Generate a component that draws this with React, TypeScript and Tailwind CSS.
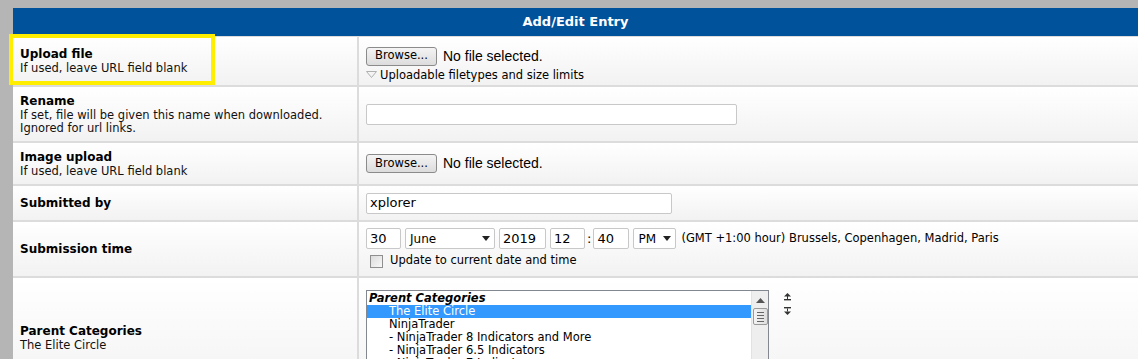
import React from "react";

const FONT = { fontFamily: '"DejaVu Sans", Verdana, sans-serif' };

// Single row of the form table: label cell on the left, control cell on the right
function Row({
  h,
  label,
  desc,
  children,
  last,
}: {
  h: string;
  label: string;
  desc?: React.ReactNode;
  children?: React.ReactNode;
  last?: boolean;
}) {
  return (
    <div className={`flex ${h} ${last ? "" : "border-b-2 border-[#dcdcdc]"}`}>
      <div className="w-[346px] shrink-0 flex flex-col justify-center px-[7px] bg-gradient-to-b from-white to-[#f2f2f2] border-r-2 border-[#dcdcdc]">
        <div className="text-[12px] font-bold text-black leading-[15px]">{label}</div>
        {desc && <div className="text-[11.5px] text-[#111] leading-[13px]">{desc}</div>}
      </div>
      <div className="flex-1 flex flex-col justify-center px-[7px] bg-gradient-to-b from-white to-[#f2f2f2]">
        {children}
      </div>
    </div>
  );
}

function BrowseButton() {
  return (
    <div className="flex items-center">
      <div className="h-[19px] w-[71px] flex items-center justify-center rounded-[3px] border border-[#8b8b8b] bg-gradient-to-b from-[#f4f4f4] to-[#dcdcdc] text-[11.5px] text-black">
        Browse...
      </div>
      <span className="ml-[6px] text-[14px] text-black" style={{ fontFamily: '"Liberation Sans", Arial, sans-serif' }}>
        No file selected.
      </span>
    </div>
  );
}

function TextBox({ w, value }: { w: string; value?: string }) {
  return (
    <div className={`${w} h-[21px] border border-[#c8c8c8] rounded-[2px] bg-white flex items-center px-[3px] text-[13px] text-black`}>
      {value}
    </div>
  );
}

function SelectBox({ w, value }: { w: string; value: string }) {
  return (
    <div className={`${w} h-[21px] border border-[#c8c8c8] rounded-[2px] bg-white flex items-center justify-between px-[4px] text-[12px] text-black`}>
      <span>{value}</span>
      <svg width="8" height="5" viewBox="0 0 8 5">
        <path d="M0 0h8L4 5z" fill="#222" />
      </svg>
    </div>
  );
}

const categories = [
  "NinjaTrader",
  "- NinjaTrader 8 Indicators and More",
  "- NinjaTrader 6.5 Indicators",
  "- NinjaTrader 7 Indicators",
  "- NinjaTrader Strategies",
  "Other Platforms",
];

export default function App() {
  return (
    <div className="w-[1138px] h-[359px] overflow-hidden bg-[#b5b5b5] pt-[8px] pl-[13px] relative" style={FONT}>
      <div className="bg-white">
        <div className="h-[29px] bg-[#00529b] flex items-center justify-center text-white text-[13px] font-bold border-b border-[#dcdcdc]">
          Add/Edit Entry
        </div>

        <Row h="h-[50px]" label="Upload file" desc="If used, leave URL field blank">
          <div className="self-start mt-[5px]">
            <BrowseButton />
            <div className="flex items-center mt-[1px] text-[11.5px] leading-[14px] text-black">
              <svg width="11" height="7" viewBox="0 0 11 7" className="mr-[3px]">
                <path d="M0.5 0.5h10L5.5 6.5z" fill="#f4f4f4" stroke="#b0b0b0" />
              </svg>
              Uploadable filetypes and size limits
            </div>
          </div>
        </Row>

        <Row
          h="h-[56px]"
          label="Rename"
          desc={
            <>
              If set, file will be given this name when downloaded.
              <br />
              Ignored for url links.
            </>
          }
        >
          <TextBox w="w-[371px]" />
        </Row>

        <Row h="h-[43px]" label="Image upload" desc="If used, leave URL field blank">
          <BrowseButton />
        </Row>

        <Row h="h-[36px]" label="Submitted by">
          <TextBox w="w-[306px]" value="xplorer" />
        </Row>

        <Row h="h-[56px]" label="Submission time">
          <div className="flex items-center">
            <TextBox w="w-[35px]" value="30" />
            <div className="ml-[4px]">
              <SelectBox w="w-[90px]" value="June" />
            </div>
            <div className="ml-[4px]">
              <TextBox w="w-[47px]" value="2019" />
            </div>
            <div className="ml-[4px]">
              <TextBox w="w-[35px]" value="12" />
            </div>
            <span className="mx-[2px] text-[13px]">:</span>
            <TextBox w="w-[36px]" value="40" />
            <div className="ml-[4px]">
              <SelectBox w="w-[43px]" value="PM" />
            </div>
            <span className="ml-[5px] text-[11.5px] text-black">
              (GMT +1:00 hour) Brussels, Copenhagen, Madrid, Paris
            </span>
          </div>
          <div className="flex items-center mt-[3px] ml-[4px] text-[11.5px] text-black">
            <div className="w-[13px] h-[13px] border border-[#8f8f8f] bg-gradient-to-br from-[#dcdcdc] to-[#f8f8f8] mr-[7px]" />
            Update to current date and time
          </div>
        </Row>

        <Row h="h-[120px]" label="Parent Categories" desc="The Elite Circle" last>
          <div className="flex items-start self-start mt-[8px]">
            <div className="w-[403px] h-[104px] border border-[#828790] bg-white flex overflow-hidden">
              <div className="flex-1 pt-[1px] text-[11.5px] leading-[13px] text-black">
                <div className="pl-[2px] font-bold italic">Parent Categories</div>
                <div className="pl-[22px] bg-[#3399ff] text-white">The Elite Circle</div>
                {categories.map((c) => (
                  <div key={c} className="pl-[22px]">
                    {c}
                  </div>
                ))}
              </div>
              <div className="w-[17px] bg-[#eeeeee] border-l border-[#e2e2e2] flex flex-col items-center">
                <svg width="9" height="5" viewBox="0 0 9 5" className="mt-[7px]">
                  <path d="M0 5L4.5 0L9 5z" fill="#555" />
                </svg>
                <div className="mt-[5px] w-[15px] h-[17px] border border-[#9a9a9a] rounded-[2px] bg-gradient-to-r from-[#f4f4f4] to-[#dedede] flex flex-col items-center justify-center gap-[2px]">
                  <div className="w-[7px] h-px bg-[#666]" />
                  <div className="w-[7px] h-px bg-[#666]" />
                  <div className="w-[7px] h-px bg-[#666]" />
                  <div className="w-[7px] h-px bg-[#666]" />
                </div>
              </div>
            </div>
            <div className="ml-[15px] mt-[3px] flex flex-col gap-[6px]">
              <svg width="7" height="8" viewBox="0 0 7 8">
                <path d="M3.5 0L7 3.5H0z" fill="#333" />
                <rect x="0" y="6" width="7" height="1.4" fill="#333" />
                <rect x="3" y="3" width="1" height="3" fill="#333" />
              </svg>
              <svg width="7" height="8" viewBox="0 0 7 8">
                <rect x="0" y="0" width="7" height="1.4" fill="#333" />
                <rect x="3" y="1.4" width="1" height="3" fill="#333" />
                <path d="M0 4.5H7L3.5 8z" fill="#333" />
              </svg>
            </div>
          </div>
        </Row>
      </div>

      {/* yellow highlight around the first label */}
      <div className="absolute left-[9px] top-[34px] w-[206px] h-[51px] border-[4px] border-[#ffee00] pointer-events-none" />
    </div>
  );
}
